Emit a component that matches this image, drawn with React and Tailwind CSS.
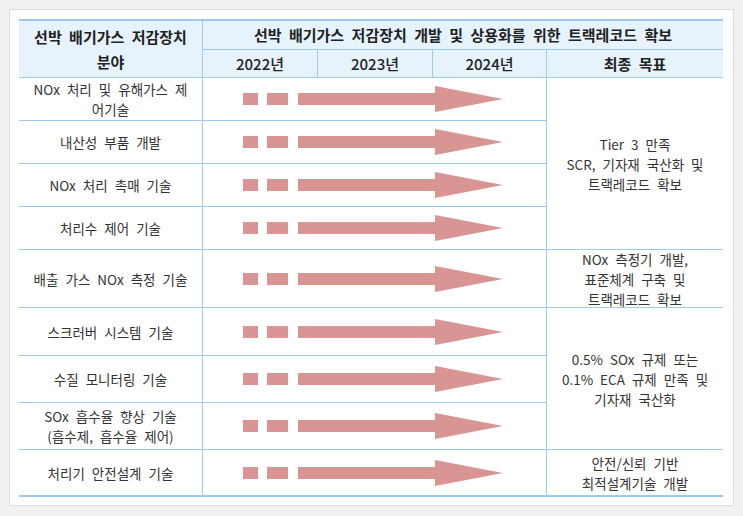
import React from "react";

const rows = [
  { label: ["NOx 처리 및 유해가스 제", "어기술"] },
  { label: ["내산성 부품 개발"] },
  { label: ["NOx 처리 촉매 기술"] },
  { label: ["처리수 제어 기술"] },
  { label: ["배출 가스 NOx 측정 기술"] },
  { label: ["스크러버 시스템 기술"] },
  { label: ["수질 모니터링 기술"] },
  { label: ["SOx 흡수율 향상 기술", "(흡수제, 흡수율 제어)"] },
  { label: ["처리기 안전설계 기술"] },
];

function Arrow() {
  return (
    <div className="flex items-center pl-[40px]">
      <div className="w-[15px] h-[12px] bg-[#d99594]" />
      <div className="w-[21px] h-[12px] bg-[#d99594] ml-[9px]" />
      <div className="w-[137px] h-[12px] bg-[#d99594] ml-[10px]" />
      <svg width="68" height="26" viewBox="0 0 68 26" className="block">
        <polygon points="0,0 68,13 0,26" fill="#d99594" />
      </svg>
    </div>
  );
}

function Lines({ lines }) {
  return (
    <div className="text-center">
      {lines.map((l, i) => (
        <div key={i}>{l}</div>
      ))}
    </div>
  );
}

export default function App() {
  const rowTemplate =
    "grid-rows-[28px_27px_42px_42px_42px_42px_57px_47px_46px_46px_45px]";
  return (
    <div
      className="w-[743px] h-[516px] bg-[#f1f1f1] p-[9px]"
      style={{ fontFamily: '"Noto Sans CJK KR", "Noto Sans", sans-serif' }}
    >
      <div className="w-[725px] h-[497px] bg-white border border-[#dcdcdc] pt-[9px] pl-[9px]">
        <div
          className={`w-[704px] grid grid-cols-[183px_114px_114px_113px_176px] ${rowTemplate} gap-[1px] bg-[#9dcbf0] py-[2px] text-[13.5px] leading-[20px] text-[#333] [word-spacing:4px]`}
        >
          {/* header */}
          <div className="row-span-2 bg-[#e6f2fc] flex items-center justify-center font-bold text-[15px] leading-[25px] text-[#222]">
            <Lines lines={["선박 배기가스 저감장치", "분야"]} />
          </div>
          <div className="col-span-4 bg-[#e6f2fc] flex items-center justify-center font-bold text-[15px] text-[#222]">
            선박 배기가스 저감장치 개발 및 상용화를 위한 트랙레코드 확보
          </div>
          <div className="bg-[#e6f2fc] flex items-center justify-center text-[15px] font-medium text-[#222]">2022년</div>
          <div className="bg-[#e6f2fc] flex items-center justify-center text-[15px] font-medium text-[#222]">2023년</div>
          <div className="bg-[#e6f2fc] flex items-center justify-center text-[15px] font-medium text-[#222]">2024년</div>
          <div className="bg-[#e6f2fc] flex items-center justify-center text-[15px] font-bold text-[#222]">최종 목표</div>

          {/* body rows */}
          {rows.map((r, i) => (
            <React.Fragment key={i}>
              <div
                className="bg-white flex items-center justify-center"
                style={{ gridColumn: 1, gridRow: i + 3 }}
              >
                <Lines lines={r.label} />
              </div>
              <div
                className="bg-white flex items-center"
                style={{ gridColumn: "2 / span 3", gridRow: i + 3 }}
              >
                <Arrow />
              </div>
            </React.Fragment>
          ))}

          <div
            className="bg-white flex items-center justify-center"
            style={{ gridColumn: 5, gridRow: "3 / span 4" }}
          >
            <Lines lines={["Tier 3 만족", "SCR, 기자재 국산화 및", "트랙레코드 확보"]} />
          </div>
          <div
            className="bg-white flex items-center justify-center"
            style={{ gridColumn: 5, gridRow: 7 }}
          >
            <Lines lines={["NOx 측정기 개발,", "표준체계 구축 및", "트랙레코드 확보"]} />
          </div>
          <div
            className="bg-white flex items-center justify-center"
            style={{ gridColumn: 5, gridRow: "8 / span 3" }}
          >
            <Lines lines={["0.5% SOx 규제 또는", "0.1% ECA 규제 만족 및", "기자재 국산화"]} />
          </div>
          <div
            className="bg-white flex items-center justify-center"
            style={{ gridColumn: 5, gridRow: 11 }}
          >
            <Lines lines={["안전/신뢰 기반", "최적설계기술 개발"]} />
          </div>
        </div>
      </div>
    </div>
  );
}
